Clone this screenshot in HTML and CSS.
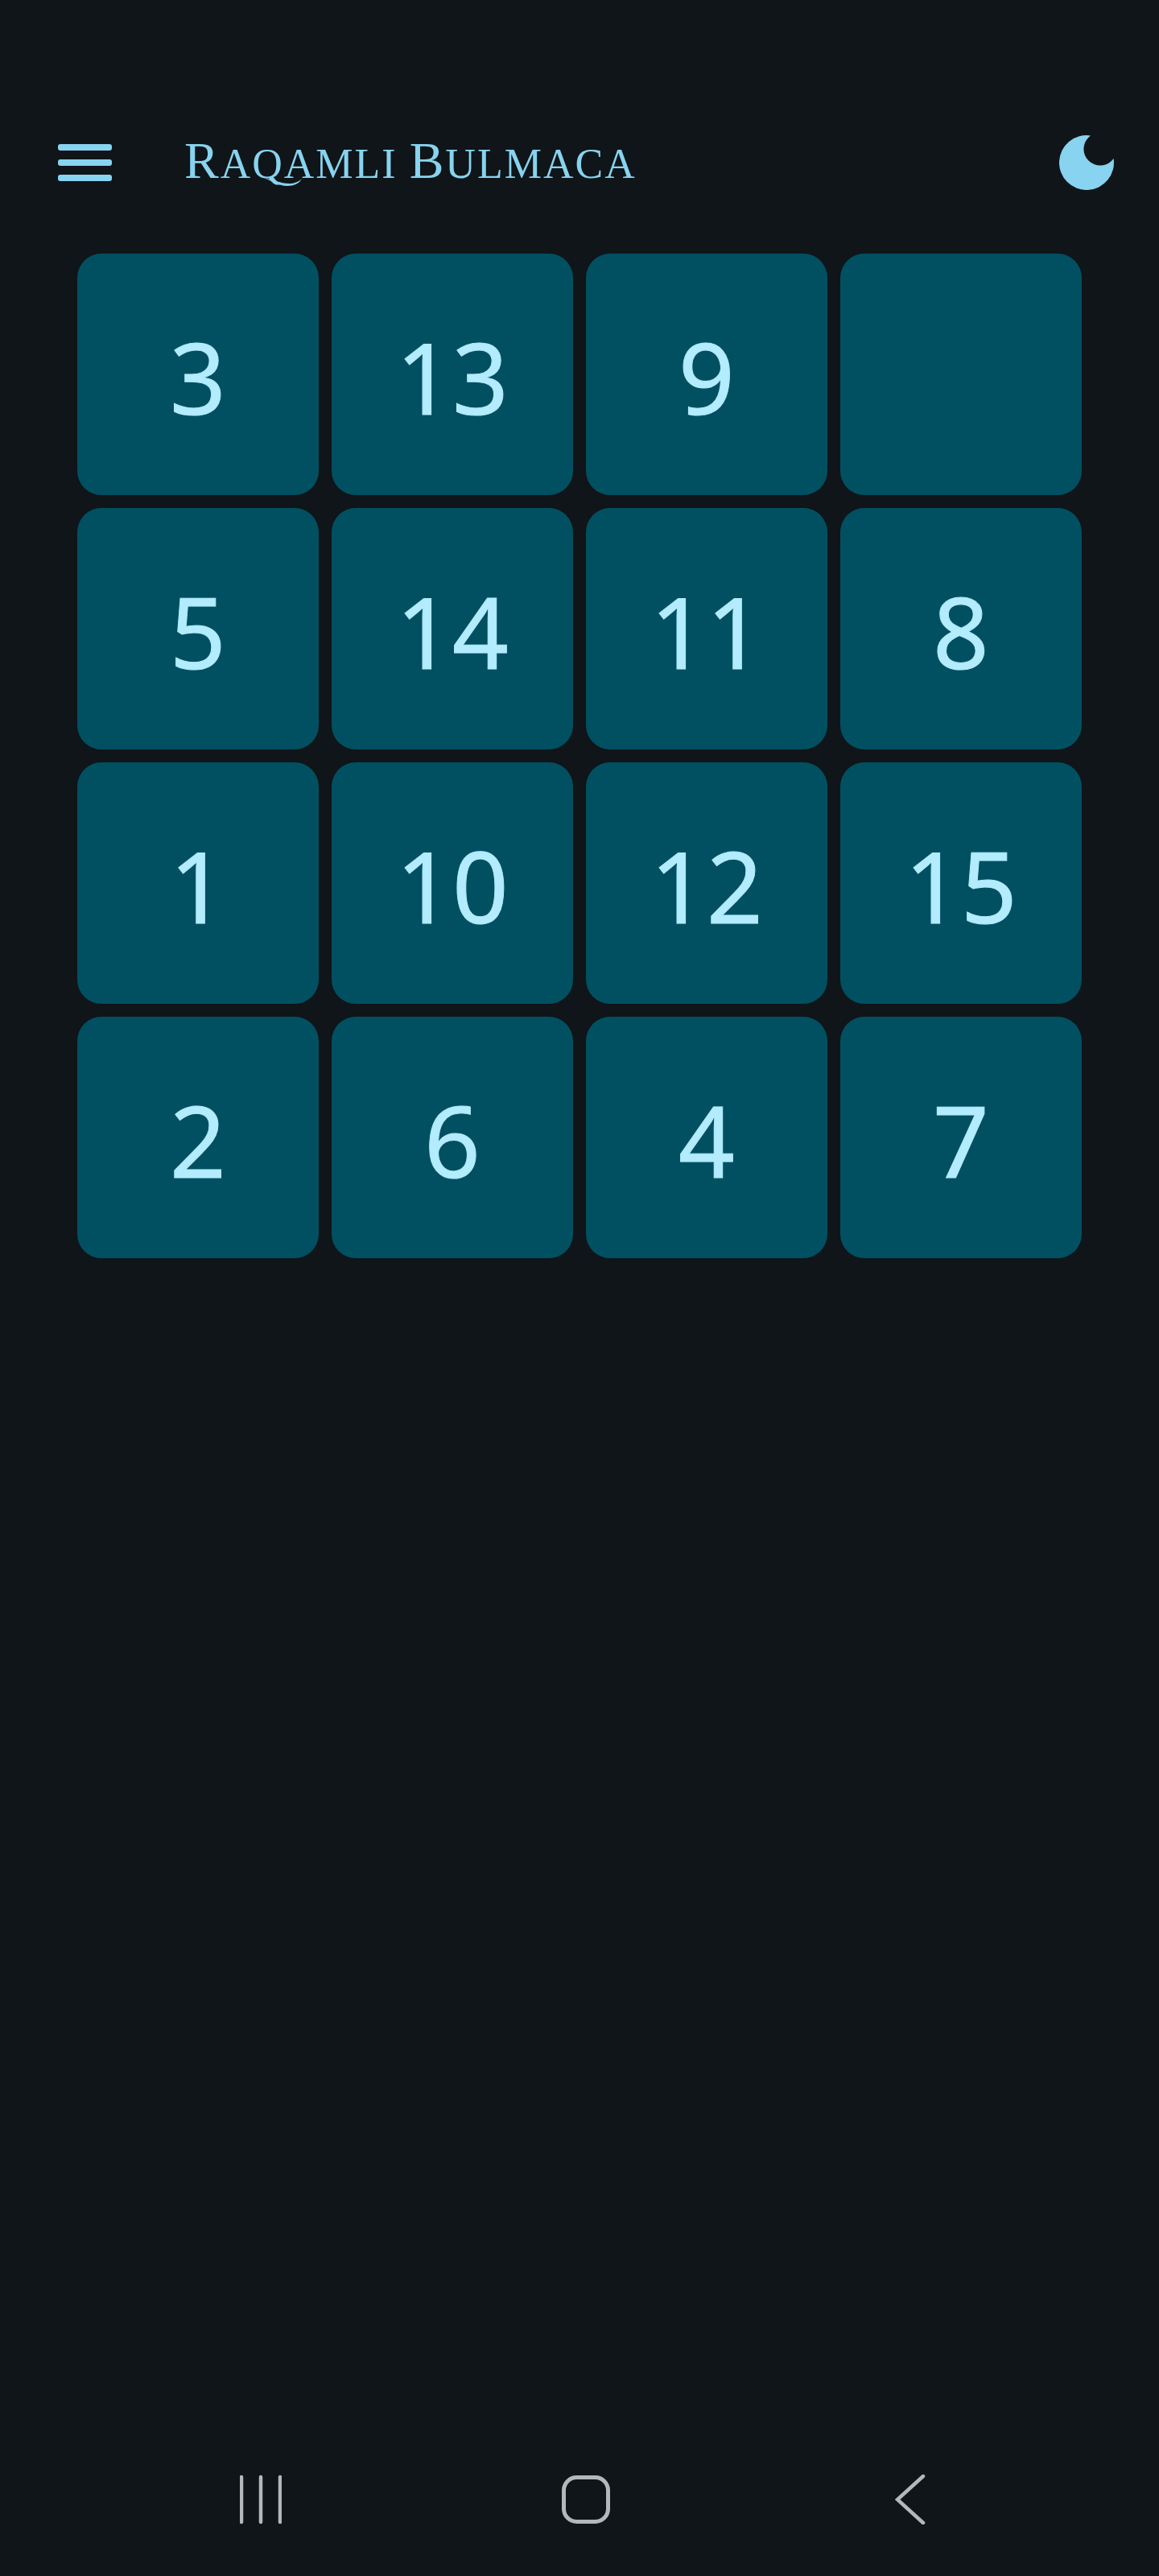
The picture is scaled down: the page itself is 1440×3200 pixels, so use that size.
FILE: index.html
```html
<!DOCTYPE html>
<html lang="en">
<head>
    <meta charset="UTF-8">
    <meta name="viewport" content="width=device-width, initial-scale=1.0">
    <title>Raqamli Bulmaca</title>
    <link rel="stylesheet" href="styles.css">
</head>
<body>
    <div class="screen">
        <header class="topbar">
            <button class="menu-btn" aria-label="Menu">
                <span></span>
                <span></span>
                <span></span>
            </button>
            <h1 class="title">
                <span class="cap">R</span>aqamli <span class="cap">B</span>ulmaca
                <!-- tail of the Q -->
                <svg class="swash" width="50" height="12" viewBox="0 0 50 12">
                    <path d="M0 1C10 4 18 11 30 11C38 11 45 8 48 2C44 6 38 8 32 8C22 8 12 3 0 1Z"/>
                </svg>
            </h1>
            <svg class="moon" width="68" height="68" viewBox="0 0 68 68">
                <path d="M39 .4A34 34 0 1 0 67.6 29A20.5 20.5 0 1 1 39 .4Z"/>
            </svg>
        </header>

        <div class="board">
            <div class="tile">3</div>
            <div class="tile">13</div>
            <div class="tile">9</div>
            <div class="tile"></div>
            <div class="tile">5</div>
            <div class="tile">14</div>
            <div class="tile">11</div>
            <div class="tile">8</div>
            <div class="tile">1</div>
            <div class="tile">10</div>
            <div class="tile">12</div>
            <div class="tile">15</div>
            <div class="tile">2</div>
            <div class="tile">6</div>
            <div class="tile">4</div>
            <div class="tile">7</div>
        </div>

        <nav class="navbar">
            <svg width="52" height="62" viewBox="0 0 52 62">
                <path d="M2 3V59M26 3V59M50 3V59"/>
            </svg>
            <svg width="60" height="60" viewBox="0 0 60 60">
                <rect x="2.5" y="2.5" width="55" height="55" rx="16"/>
            </svg>
            <svg class="back" width="38" height="62" viewBox="0 0 38 62">
                <path d="M35 2L3 31L35 60"/>
            </svg>
        </nav>
    </div>
</body>
</html>
```

FILE: styles.css
```css
body {
    margin: 0;
    background-color: #0f1518;
    font-family: "Noto Sans", sans-serif;
}
.screen {
    display: flex;
    flex-direction: column;
    height: 3200px;
}
.topbar {
    display: flex;
    align-items: center;
    height: 68px;
    padding: 168px 56px 0 72px;
}
.menu-btn {
    display: flex;
    flex-direction: column;
    gap: 11px;
    padding: 0;
    background: none;
    border: none;
}
.menu-btn span {
    width: 67px;
    height: 8px;
    background-color: #87d3f0;
    border-radius: 3px;
}
.title {
    position: relative;
    flex: 1;
    margin: 0 0 0 90px;
    color: #87d3f0;
    font-family: "Liberation Serif", serif;
    font-size: 52px;
    font-weight: normal;
    line-height: 68px;
    letter-spacing: 2px;
    text-transform: uppercase;
}
.cap {
    font-size: 64px;
}
.swash {
    position: absolute;
    left: 98px;
    top: 54px;
    fill: #87d3f0;
}
.moon {
    fill: #87d3f0;
}
.board {
    display: grid;
    grid-template-columns: repeat(4, 300px);
    grid-auto-rows: 300px;
    gap: 16px;
    margin: 79px 0 0 96px;
}
.tile {
    display: flex;
    align-items: center;
    justify-content: center;
    padding-top: 6px;
    box-sizing: border-box;
    background-color: #015062;
    border-radius: 30px;
    color: #b3ebff;
    font-size: 122px;
    -webkit-text-stroke: 1px #b3ebff;
}
.navbar {
    display: grid;
    grid-template-columns: repeat(3, 404px);
    justify-items: center;
    align-items: center;
    margin-top: auto;
    padding: 0 0 64px 122px;
}
.navbar svg {
    fill: none;
    stroke: #b5b8ba;
    stroke-width: 4.5;
    stroke-linecap: round;
}
.navbar rect {
    stroke-width: 5;
}
.navbar .back {
    margin-right: 2px;
}
```
